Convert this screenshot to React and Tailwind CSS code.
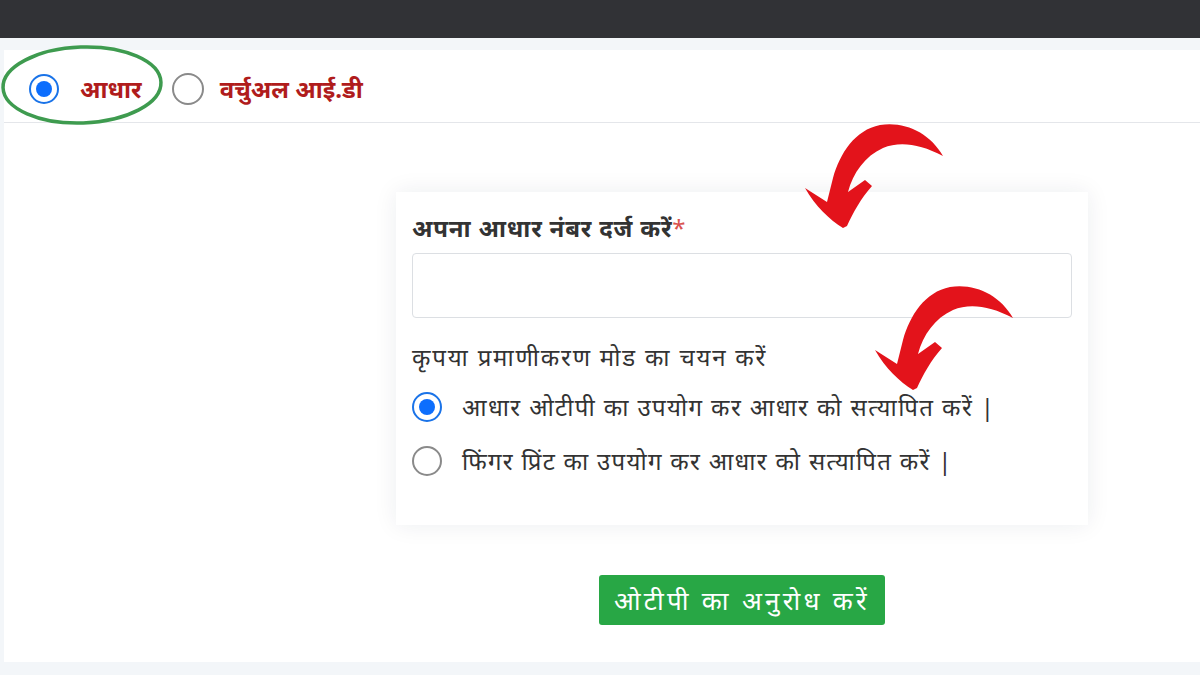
const font = { fontFamily: '"Noto Sans", "Lato", sans-serif' }

function Radio({ checked, size = 'w-[30px] h-[30px]' }) {
  return (
    <span
      className={`${size} shrink-0 rounded-full flex items-center justify-center border-2 ${
        checked ? 'border-[#1a73e8] bg-white' : 'border-[#8a8a8a] bg-white'
      }`}
    >
      {checked && <span className="w-[62%] h-[62%] rounded-full bg-[#0d6efd]" />}
    </span>
  )
}

function CurvedArrow({ className }) {
  return (
    <svg className={className} width="160" height="120" viewBox="0 0 160 120">
      <path
        d="M148,38 C135,15 110,3 85,7 C60,12 45,35 38,60 L32,84 L10,70 C20,88 35,102 48,110 L52,108 C58,95 66,80 77,68 L70,62 L53,74 C58,55 70,38 88,30 C105,23 125,26 148,38 Z"
        fill="#e3131b"
      />
    </svg>
  )
}

export default function App() {
  return (
    <div className="relative w-[1200px] h-[675px] bg-[#f3f6f9] overflow-hidden" style={font}>
      {/* Top bar */}
      <div className="h-[38px] bg-[#313236]" />

      {/* Panel */}
      <div className="mt-[12px] ml-[4px] h-[612px] bg-white">
        {/* ID type choice */}
        <div className="h-[73px] pt-[6px] flex items-center pl-[25px] border-b border-[#e4e6ea]">
          <label className="flex items-center gap-[21px]">
            <Radio checked size="w-[30px] h-[30px]" />
            <span className="text-[24px] leading-[36px] font-bold text-[#b01c1c]">आधार</span>
          </label>
          <label className="flex items-center gap-[16px] ml-[30px]">
            <Radio size="w-[32px] h-[32px]" />
            <span className="text-[24px] leading-[36px] font-bold text-[#b01c1c]">वर्चुअल आई.डी</span>
          </label>
        </div>

        <div className="pl-[392px] pt-[69px]">
          {/* Card */}
          <div className="w-[692px] bg-white px-4 pt-[18px] pb-[46px] shadow-[0_0_22px_rgba(30,40,60,0.08)]">
            <div className="text-[24px] leading-[36px] tracking-[0.8px] font-bold text-[#333]">
              अपना आधार नंबर दर्ज करें<span className="text-[#d9534f] font-normal">*</span>
            </div>
            <div className="mt-[7px] h-[65px] border border-[#dcdfe3] rounded-[4px]" />
            <div className="mt-[21px] text-[24px] leading-[36px] tracking-[1.8px] text-[#333]">
              कृपया प्रमाणीकरण मोड का चयन करें
            </div>
            <div className="mt-[14px] flex items-center gap-[20px]">
              <Radio checked />
              <span className="text-[24px] leading-[36px] tracking-[1.4px] text-[#333]">
                आधार ओटीपी का उपयोग कर आधार को सत्यापित करें |
              </span>
            </div>
            <div className="mt-[18px] flex items-center gap-[20px]">
              <Radio />
              <span className="text-[24px] leading-[36px] tracking-[1.3px] text-[#333]">
                फिंगर प्रिंट का उपयोग कर आधार को सत्यापित करें |
              </span>
            </div>
          </div>

          <div className="w-[692px] flex justify-center mt-[50px]">
            <button className="w-[286px] h-[50px] rounded-[3px] bg-[#28a745] text-white text-[26px] tracking-[3.3px]">
              ओटीपी का अनुरोध करें
            </button>
          </div>
        </div>
      </div>

      {/* Annotations */}
      <svg className="absolute left-0 top-[43px]" width="168" height="84" viewBox="0 0 168 84">
        <ellipse cx="82" cy="42" rx="79" ry="38" fill="none" stroke="#3e9b4f" strokeWidth="3.5" transform="rotate(-2 82 42)" />
      </svg>
      <CurvedArrow className="absolute left-[795px] top-[118px]" />
      <CurvedArrow className="absolute left-[865px] top-[280px]" />
    </div>
  )
}
